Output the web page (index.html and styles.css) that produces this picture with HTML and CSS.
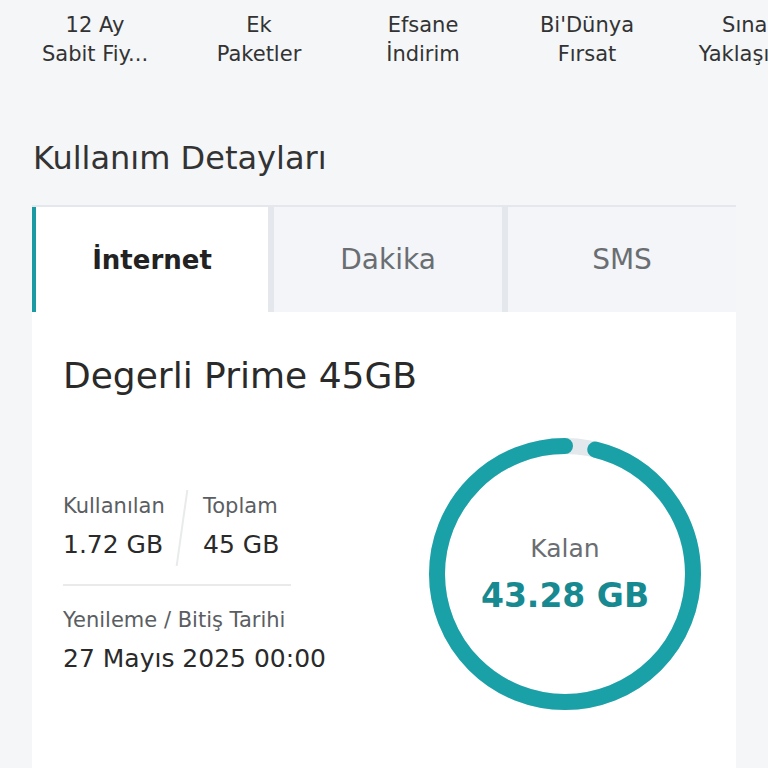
FILE: index.html
```html
<!DOCTYPE html>
<html lang="tr">
<head>
<meta charset="utf-8">
<link rel="stylesheet" href="styles.css">
</head>
<body>
<div class="shortcuts">
  <div class="shortcut">12 Ay<br>Sabit Fiy...</div>
  <div class="shortcut">Ek<br>Paketler</div>
  <div class="shortcut">Efsane<br>İndirim</div>
  <div class="shortcut">Bi'Dünya<br>Fırsat</div>
  <div class="shortcut">Sınav<br>Yaklaşıyor</div>
</div>

<h2 class="section-title">Kullanım Detayları</h2>

<div class="card">
  <div class="tabs">
    <div class="tab active">İnternet</div>
    <div class="tab">Dakika</div>
    <div class="tab">SMS</div>
  </div>
  <div class="card-body">
    <div class="package-name">Degerli Prime 45GB</div>
    <div class="usage">
      <div class="info">
        <div class="stats">
          <div class="stat stat-used">
            <div class="label">Kullanılan</div>
            <div class="value">1.72 GB</div>
          </div>
          <div class="slash"></div>
          <div class="stat">
            <div class="label">Toplam</div>
            <div class="value">45 GB</div>
          </div>
        </div>
        <div class="divider"></div>
        <div class="label">Yenileme / Bitiş Tarihi</div>
        <div class="value">27 Mayıs 2025 00:00</div>
      </div>
      <div class="ring">
        <svg class="ring-svg" width="274" height="274" viewBox="0 0 274 274">
          <circle cx="137" cy="137" r="128" fill="none" stroke="#e2e8eb" stroke-width="16"/>
          <circle cx="137" cy="137" r="128" fill="none" stroke="#1aa1a8" stroke-width="16" stroke-linecap="round" stroke-dasharray="773.6 30.6" stroke-dashoffset="773.6" transform="rotate(-90 137 137)"/>
        </svg>
        <div class="ring-text">
          <div class="ring-label">Kalan</div>
          <div class="ring-value">43.28 GB</div>
        </div>
      </div>
    </div>
  </div>
</div>
</body>
</html>
```

FILE: styles.css
```css
* { box-sizing: border-box; }
html, body {
  margin: 0;
  padding: 0;
  background: #f4f6f8;
  font-family: "DejaVu Sans", "Open Sans", sans-serif;
  color: #2a2a2a;
  overflow: hidden;
}
.shortcuts {
  display: flex;
  padding: 11px 0 0 13px;
  width: 768px;
  overflow: hidden;
  white-space: nowrap;
}
.shortcut {
  flex: 0 0 164px;
  text-align: center;
  font-size: 21px;
  line-height: 29px;
  color: #333333;
  overflow: hidden;
}
.section-title {
  margin: 69px 0 0 33px;
  font-size: 32px;
  line-height: 40px;
  font-weight: 400;
  color: #333333;
}
.card {
  margin: 27px 32px 0 32px;
  background: #ffffff;
}
.tabs {
  display: grid;
  grid-template-columns: 236px 1fr 1fr;
  column-gap: 6px;
  background: #e4e8ed;
  padding-top: 2px;
}
.tab {
  height: 105px;
  display: flex;
  align-items: center;
  justify-content: center;
  font-size: 28px;
  color: #6a6e72;
  background: #f3f5f8;
}
.tab.active {
  background: #ffffff;
  color: #222222;
  font-size: 26px;
  font-weight: 700;
  border-left: 4px solid #1a9aa2;
}
.card-body {
  padding: 42px 34px 60px 31px;
  background: #ffffff;
}
.package-name {
  font-size: 36px;
  line-height: 44px;
  color: #2a2a2a;
}
.usage {
  display: flex;
  align-items: flex-start;
  margin-top: 39px;
}
.info {
  width: 228px;
  padding-top: 55px;
}
.stats {
  display: flex;
  align-items: flex-start;
}
.stat-used {
  width: 118px;
}
.slash {
  width: 2px;
  height: 76px;
  margin: -2px 20px 0 0;
  background: #e8eaec;
  transform: skewX(-8deg);
}
.label {
  font-size: 21px;
  line-height: 28px;
  color: #5a5e62;
  white-space: nowrap;
}
.value {
  margin-top: 10px;
  font-size: 25px;
  line-height: 32px;
  color: #2a2a2a;
  white-space: nowrap;
}
.divider {
  height: 2px;
  background: #e8eaec;
  margin: 18px 0 20px 0;
}
.info .value:last-child {
  margin-top: 9px;
}
.ring {
  margin-left: auto;
  display: grid;
  width: 274px;
  height: 274px;
}
.ring-svg, .ring-text {
  grid-area: 1 / 1;
}
.ring-text {
  display: flex;
  flex-direction: column;
  align-items: center;
  justify-content: center;
  padding-top: 2px;
}
.ring-label {
  font-size: 25px;
  line-height: 30px;
  color: #6a6e72;
}
.ring-value {
  margin-top: 12px;
  font-size: 33px;
  line-height: 40px;
  font-weight: 700;
  color: #168a90;
}
```
